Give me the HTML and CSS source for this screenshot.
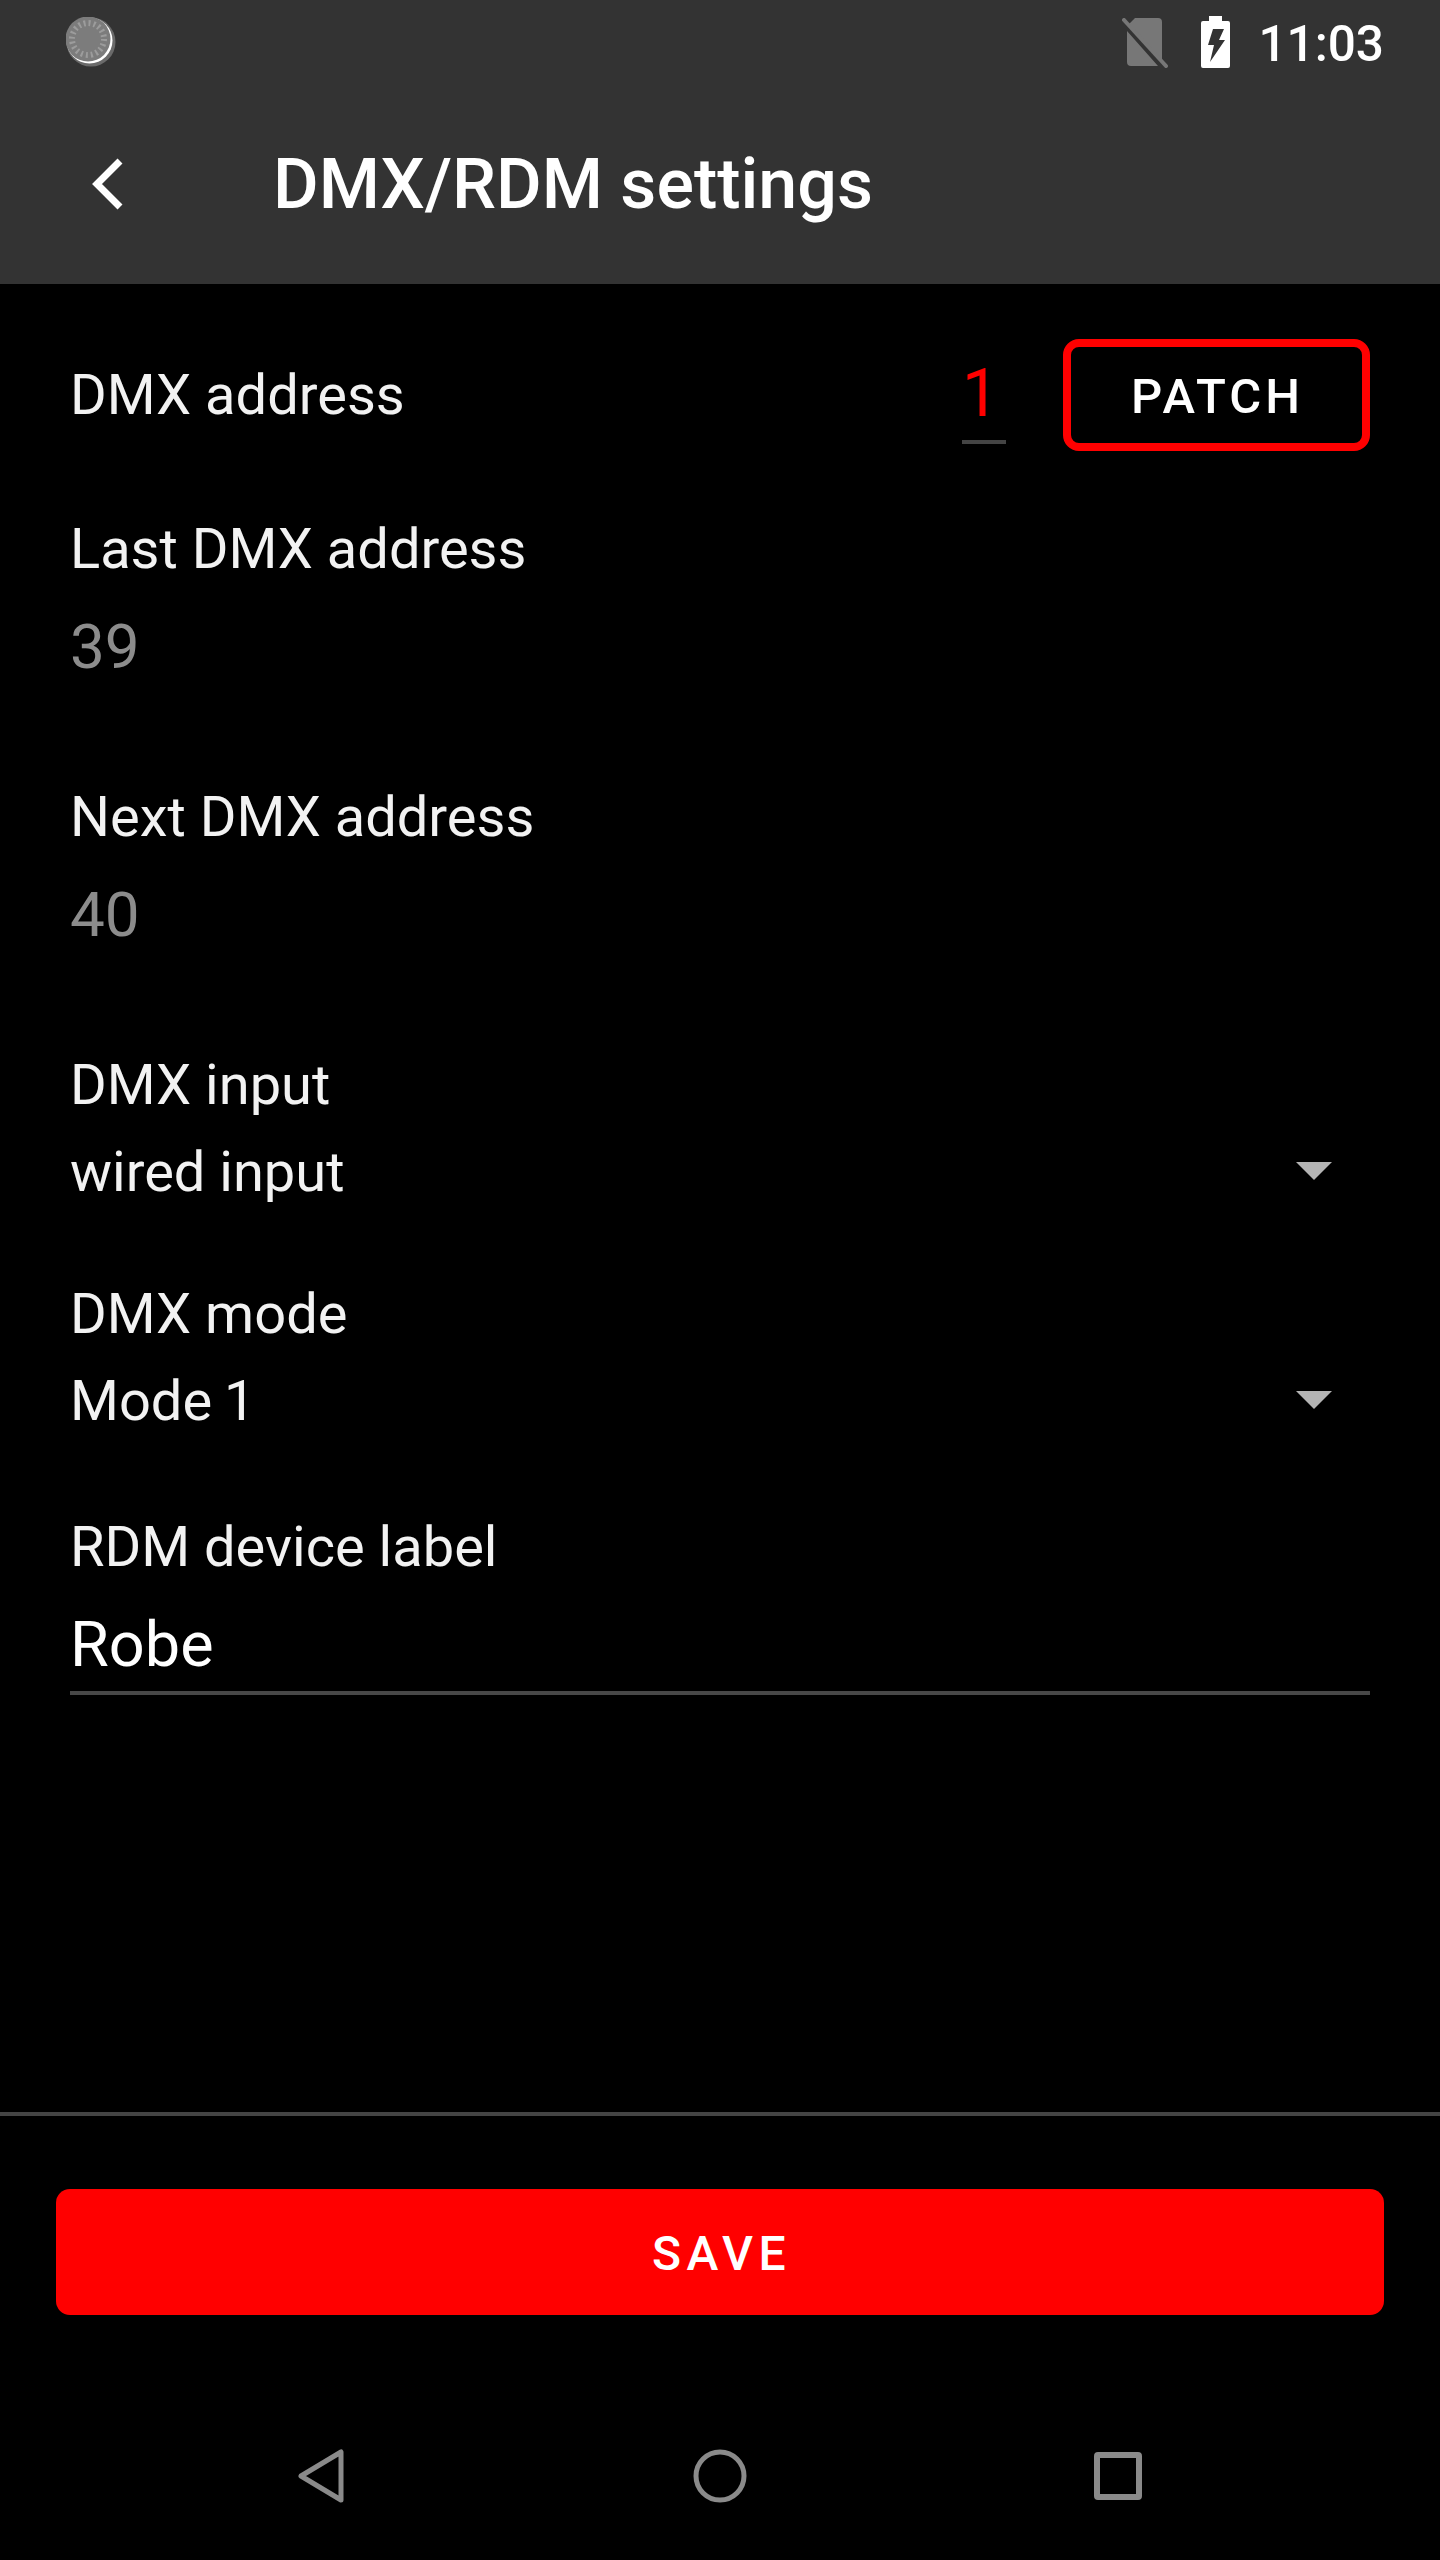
FILE: index.html
```html
<!DOCTYPE html>
<html lang="en"><head>
    <meta charset="utf-8">
    <meta name="viewport" content="width=device-width, initial-scale=1.0">
    <title>DMX/RDM settings</title>
    <link rel="stylesheet" href="styles.css">
</head>
<body>
    <div id="app">
        <header id="top">
            <div id="status">
                <svg class="spinner" width="50" height="50" viewBox="0 0 50 50">
                    <circle cx="25" cy="25" r="24.5" fill="#6a6a6a"/>
                    <circle cx="23.5" cy="23.5" r="23" fill="#fff"/>
                    <circle cx="22" cy="22" r="22.5" fill="#7c7c7c"/>
                    <circle cx="22" cy="22" r="16" fill="none" stroke="#9c9c9c" stroke-width="6" stroke-dasharray="2 3.03"/>
                </svg>
                <div id="status-right">
                    <svg class="sim" width="46" height="50" viewBox="0 0 46 50">
                        <path d="M13 0h23a4 4 0 0 1 4 4v38l-33-36z M5 13l31 35h-27a4 4 0 0 1-4-4z" fill="#777"/>
                        <path d="M2 2l42 46" stroke="#777" stroke-width="4" stroke-linecap="round"/>
                    </svg>
                    <svg class="battery" width="29" height="52" viewBox="0 0 29 52">
                        <path d="M8 0h13v5h6a2 2 0 0 1 2 2v43a2 2 0 0 1-2 2h-25a2 2 0 0 1-2-2v-43a2 2 0 0 1 2-2h6z" fill="#fff"/>
                        <path d="M12 13h11l-5 11h6l-15 22 4-17h-6z" fill="#333"/>
                    </svg>
                    <span id="clock">11:03</span>
                </div>
            </div>
            <div id="toolbar">
                <svg width="34" height="54" viewBox="0 0 34 54">
                    <path d="M29 4l-23 23 23 23" fill="none" stroke="#fff" stroke-width="7"/>
                </svg>
                <h1>DMX/RDM settings</h1>
            </div>
        </header>

        <main id="form">
            <div class="address-row">
                <span class="label">DMX address</span>
                <span class="address-input">1</span>
                <button class="patch" type="button">PATCH</button>
            </div>
            <div class="readonly first">
                <div class="label">Last DMX address</div>
                <div class="value">39</div>
            </div>
            <div class="readonly">
                <div class="label">Next DMX address</div>
                <div class="value">40</div>
            </div>
            <div class="select first">
                <div class="label">DMX input</div>
                <div class="select-row"><span class="label">wired input</span><i class="arrow"></i></div>
            </div>
            <div class="select">
                <div class="label">DMX mode</div>
                <div class="select-row"><span class="label mode">Mode 1</span><i class="arrow"></i></div>
            </div>
            <div class="device-label">
                <div class="label">RDM device label</div>
                <div class="text-input">Robe</div>
            </div>
        </main>

        <div id="actions">
            <button class="save" type="button">SAVE</button>
        </div>

        <nav id="nav">
            <svg width="46" height="54" viewBox="0 0 46 54">
                <path d="M43 3v48l-40-24z" fill="none" stroke="#8a8a8a" stroke-width="5" stroke-linejoin="round"/>
            </svg>
            <svg class="home" width="54" height="54" viewBox="0 0 54 54">
                <circle cx="27" cy="27" r="24" fill="none" stroke="#8a8a8a" stroke-width="5"/>
            </svg>
            <svg width="48" height="48" viewBox="0 0 48 48">
                <rect x="3" y="3" width="42" height="42" rx="1" fill="none" stroke="#8a8a8a" stroke-width="6"/>
            </svg>
        </nav>
    </div>
</body></html>
```

FILE: styles.css
```css
body {
    margin: 0;
    padding: 0;
    background-color: #000;
    color: #fff;
    font-family: Roboto, "Liberation Sans", sans-serif;
}

#app {
    display: flex;
    flex-direction: column;
    height: 2560px;
    overflow: hidden;
}

#top {
    height: 284px;
    background-color: #333;
}

#status {
    display: flex;
    justify-content: space-between;
    align-items: center;
    height: 84px;
    padding: 0 56px 0 66px;
}

#status-right {
    display: flex;
    align-items: center;
    gap: 33px;
}

#status-right .sim {
    margin-top: 2px;
}

#status-right .battery {
    margin-right: -5px;
}

#clock {
    font-size: 49.5px;
    font-weight: 500;
    line-height: 84px;
    padding-top: 4px;
}

#toolbar {
    display: flex;
    align-items: center;
    height: 200px;
    padding-left: 91px;
    gap: 148px;
}

#toolbar h1 {
    margin: 0;
    font-size: 70px;
    font-weight: 500;
}

#form {
    flex: 1;
    padding: 0 70px;
    border-bottom: 4px solid #444;
}

.label {
    font-size: 56px;
    line-height: 70px;
    color: #f2f2f2;
}

.label.mode {
    word-spacing: -2px;
}

.address-row {
    display: flex;
    align-items: center;
    margin-top: 55px;
    height: 112px;
}

.address-row .label {
    flex: 1;
}

.address-input {
    width: 44px;
    margin-right: 57px;
    padding-top: 9px;
    padding-bottom: 8px;
    border-bottom: 4px solid #444;
    color: #f00;
    font-size: 66px;
    line-height: 76px;
}

.patch {
    width: 307px;
    height: 112px;
    padding: 3px 0 0 2px;
    background-color: transparent;
    border: 8px solid #f00;
    border-radius: 16px;
    color: #fff;
    font-family: inherit;
    font-size: 49px;
    font-weight: 500;
    letter-spacing: 4px;
}

.readonly {
    margin-bottom: 100px;
}

.readonly.first {
    margin-top: 63px;
}

.value {
    margin-top: 28px;
    font-size: 62px;
    line-height: 70px;
    color: #8c8c8c;
}

.select {
    margin-bottom: 72px;
}

.select-row {
    display: flex;
    justify-content: space-between;
    align-items: center;
    margin-top: 17px;
    padding-right: 38px;
}

.arrow {
    width: 0;
    height: 0;
    margin-bottom: 2px;
    border-left: 18px solid transparent;
    border-right: 18px solid transparent;
    border-top: 18px solid #b4b4b4;
}

.device-label {
    margin-top: 76px;
}

.text-input {
    margin-top: 23px;
    padding-bottom: 6px;
    border-bottom: 4px solid #484848;
    font-size: 63px;
    line-height: 80px;
}

#actions {
    padding: 73px 56px 0;
    height: 244px;
    box-sizing: border-box;
}

.save {
    width: 100%;
    height: 126px;
    padding: 2px 0 0 3px;
    background-color: #f00;
    border: none;
    border-radius: 14px;
    color: #fff;
    font-family: inherit;
    font-size: 48px;
    font-weight: 500;
    letter-spacing: 5.5px;
}

#nav {
    display: flex;
    align-items: center;
    justify-content: space-between;
    height: 200px;
    padding: 32px 298px 0 298px;
    box-sizing: border-box;
}

#nav .home {
    margin-left: 2px;
}
```
